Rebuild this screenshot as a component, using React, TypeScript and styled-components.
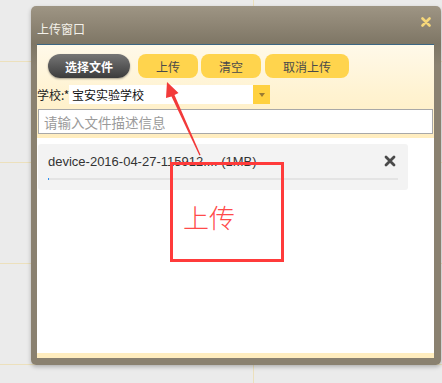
import React from "react";
import styled, { createGlobalStyle } from "styled-components";

const GlobalStyle = createGlobalStyle`
  html, body {
    margin: 0;
    padding: 0;
  }
  body {
    background: #ebebeb;
    font-family: "Noto Sans CJK SC", "Liberation Sans", sans-serif;
  }
`;

const Page = styled.div`
  position: relative;
  width: 442px;
  height: 383px;
  overflow: hidden;
  box-sizing: border-box;
  padding: 6px 0 0 31px;
  background-color: #ebebeb;
  background-image:
    repeating-linear-gradient(to bottom, transparent 0 61px, #ece0bc 61px 62px, transparent 62px 101px),
    linear-gradient(to right, transparent 0 253px, #ece0bc 253px 254px, transparent 254px);
`;

const Window = styled.div`
  width: 410px;
  height: 359px;
  box-sizing: border-box;
  padding: 0 7px 7px 6px;
  border-radius: 5px;
  display: flex;
  flex-direction: column;
  background: linear-gradient(to bottom, #9e9584 0, #8f8675 18px, #7e7665 38px, #8a8170 60px, #8a8170 100%);
  box-shadow: 0 2px 4px rgba(0, 0, 0, 0.25);
`;

const TitleBar = styled.div`
  height: 38px;
  display: flex;
  align-items: flex-start;
  justify-content: space-between;
  padding-right: 3px;
  .title {
    margin-top: 14px;
    font-size: 12px;
    color: #f4f1ea;
  }
  .close {
    margin-top: 11px;
    width: 10px;
    height: 10px;
  }
`;

const Body = styled.div`
  flex: 1;
  display: flex;
  flex-direction: column;
  border-top: 1px solid #3b6683;
  background: #ffffff;
`;

const Toolbar = styled.div`
  padding: 9px 1px 4px 0;
  background: linear-gradient(to bottom, #fff9e9 0, #fff3d2 50%, #ffedbf 100%);
`;

const ButtonRow = styled.div`
  display: flex;
  margin-left: 11px;
`;

const Button = styled.div<{ $dark?: boolean; $w: number; $gap: number }>`
  width: ${({ $w }) => $w}px;
  height: 24px;
  margin-right: ${({ $gap }) => $gap}px;
  display: flex;
  align-items: center;
  justify-content: center;
  font-size: 12px;
  border-radius: ${({ $dark }) => ($dark ? "12px" : "8px")};
  color: ${({ $dark }) => ($dark ? "#ffffff" : "#4a4a4a")};
  font-weight: ${({ $dark }) => ($dark ? 700 : 400)};
  background: ${({ $dark }) =>
    $dark ? "linear-gradient(to bottom, #767676, #3c3c3c)" : "#ffd44d"};
  box-shadow: ${({ $dark }) => ($dark ? "0 1px 2px rgba(0,0,0,0.35)" : "none")};
`;

const SchoolRow = styled.div`
  display: flex;
  align-items: center;
  margin-top: 7px;
  height: 19px;
  font-size: 12px;
  color: #222;
  .label {
    width: 32px;
    white-space: nowrap;
  }
`;

const Select = styled.div`
  width: 184px;
  height: 19px;
  background: #ffffff;
  display: flex;
  align-items: center;
  padding-left: 3px;
  box-sizing: border-box;
  font-size: 12px;
  color: #111;
`;

const DropButton = styled.div`
  width: 17px;
  height: 19px;
  background: #ffd13f;
  display: flex;
  align-items: center;
  justify-content: center;
  &::after {
    content: "";
    border-left: 3.5px solid transparent;
    border-right: 3.5px solid transparent;
    border-top: 4px solid #9a7b33;
  }
`;

const DescInput = styled.input`
  display: block;
  margin: 5px 0 0 1px;
  width: 395px;
  height: 25px;
  box-sizing: border-box;
  border: 1px solid #a8a8a8;
  padding: 0 5px;
  font-family: "Noto Sans CJK SC", sans-serif;
  font-size: 13.5px;
  color: #333;
  outline: none;
  &::placeholder {
    color: #9a9a9a;
  }
`;

const FileList = styled.div`
  flex: 1;
  padding: 6px 0 0 1px;
  background: #ffffff;
`;

const FileCard = styled.div`
  width: 370px;
  height: 46px;
  box-sizing: border-box;
  padding: 9px 10px 0 10px;
  border-radius: 3px;
  background: #f3f3f3;
  .head {
    display: flex;
    align-items: center;
    justify-content: space-between;
    height: 16px;
  }
  .name {
    font-family: "Liberation Sans", sans-serif;
    font-size: 13px;
    color: #333;
  }
  .remove {
    width: 12px;
    height: 12px;
    margin-right: 2px;
  }
`;

const Progress = styled.div`
  margin-top: 9px;
  height: 2px;
  background: #e4e4e4;
  .fill {
    height: 100%;
    background: #2b8ff2;
  }
`;

const BottomStrip = styled.div`
  height: 5px;
  background: #ffedbf;
`;

const Annotation = styled.div`
  position: absolute;
  left: 170px;
  top: 162px;
  width: 114px;
  height: 100px;
  box-sizing: border-box;
  border: 3px solid #ff3b3b;
  padding: 37px 0 0 10px;
  font-size: 26px;
  font-weight: 300;
  line-height: 30px;
  color: #ff4a4a;
`;

const ArrowLayer = styled.svg`
  position: absolute;
  left: 0;
  top: 0;
  pointer-events: none;
`;

export default function App() {
  const progress = 0.3;
  return (
    <Page>
      <GlobalStyle />
      <Window>
        <TitleBar>
          <span className="title">上传窗口</span>
          <svg className="close" viewBox="0 0 10 10">
            <path d="M1.5 1.5 L8.5 8.5 M8.5 1.5 L1.5 8.5" stroke="#f6d77a" strokeWidth="2.6" strokeLinecap="round" />
          </svg>
        </TitleBar>
        <Body>
          <Toolbar>
            <ButtonRow>
              <Button $dark $w={82} $gap={8}>选择文件</Button>
              <Button $w={60} $gap={3}>上传</Button>
              <Button $w={60} $gap={4}>清空</Button>
              <Button $w={84} $gap={0}>取消上传</Button>
            </ButtonRow>
            <SchoolRow>
              <span className="label">学校:*</span>
              <Select>宝安实验学校</Select>
              <DropButton />
            </SchoolRow>
            <DescInput placeholder="请输入文件描述信息" />
          </Toolbar>
          <FileList>
            <FileCard>
              <div className="head">
                <span className="name">device-2016-04-27-115912.... (1MB)</span>
                <svg className="remove" viewBox="0 0 12 12">
                  <path d="M2 2 L10 10 M10 2 L2 10" stroke="#4a4a4a" strokeWidth="2.8" strokeLinecap="round" />
                </svg>
              </div>
              <Progress>
                <div className="fill" style={{ width: `${progress}%` }} />
              </Progress>
            </FileCard>
          </FileList>
          <BottomStrip />
        </Body>
      </Window>
      <Annotation>上传</Annotation>
      <ArrowLayer width="442" height="383" viewBox="0 0 442 383">
        <polygon
          points="167,82 178.5,93 174.5,95 200.6,155 199.4,155.4 171.5,96.5 166,98"
          fill="#f23a3a"
        />
      </ArrowLayer>
    </Page>
  );
}
